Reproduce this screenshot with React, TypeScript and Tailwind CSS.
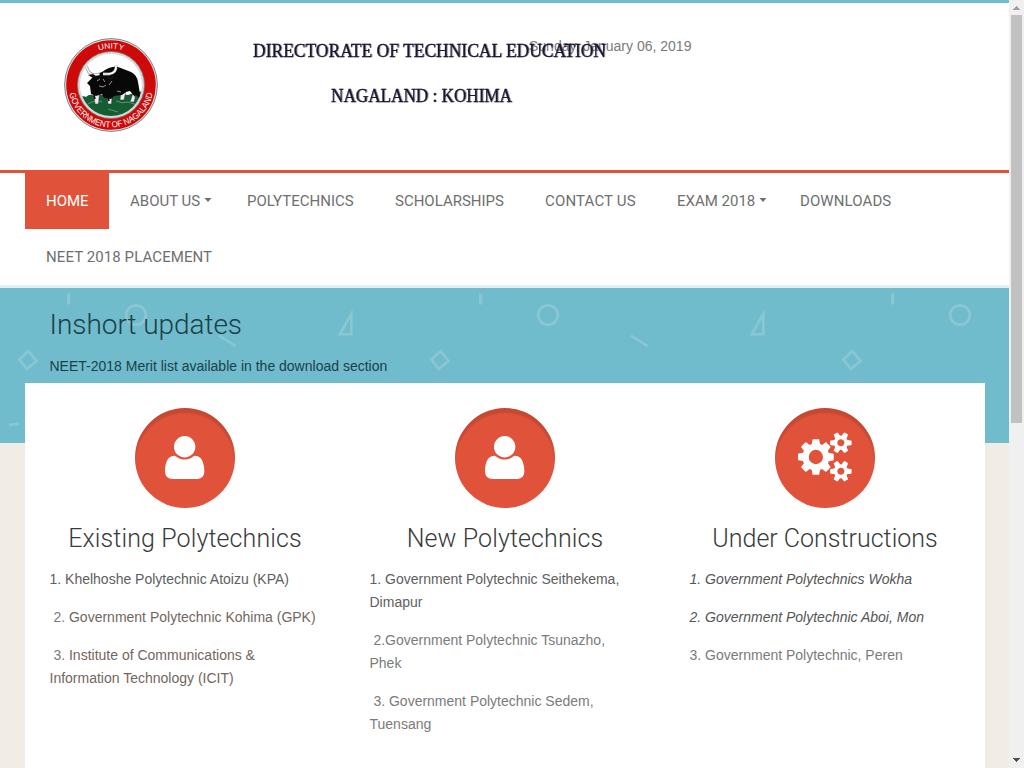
import React from "react";

const USER_PATH =
  "M1408 131q0-120-73-189.5t-194-69.5h-874q-121 0-194 69.5t-73 189.5q0 53 3.5 103.5t14 109t26.5 108.5t43 97.5t62 81t85.5 53.5t111.5 20q9 0 42-21.5t74.5-48t108-48t133.5-21.5t133.5 21.5t108 48t74.5 48t42 21.5q61 0 111.5-20t85.5-53.5t62-81t43-97.5t26.5-108.5t14-109t3.5-103.5zM1088 1024q0-159-112.5-271.5t-271.5-112.5t-271.5 112.5t-112.5 271.5t112.5 271.5t271.5 112.5t271.5-112.5t112.5-271.5z";

const COGS_PATH =
  "M896 896q0-106-75-181t-181-75-181 75-75 181 75 181 181 75 181-75 75-181zm768 512q0-52-38-90t-90-38-90 38-38 90q0 53 37.5 90.5t90.5 37.5 90.5-37.5 37.5-90.5zm0-1024q0-52-38-90t-90-38-90 38-38 90q0 53 37.5 90.5t90.5 37.5 90.5-37.5 37.5-90.5zm-384 421v185q0 10-7 19.5t-16 10.5l-155 24q-11 35-32 76 34 48 90 115 7 11 7 20 0 12-7 19-23 30-82.5 89.5t-78.5 59.5q-11 0-21-7l-115-90q-37 19-77 31-11 108-23 155-7 24-30 24h-186q-11 0-20-7.5t-10-17.5l-23-153q-34-10-75-31l-118 89q-7 7-20 7-11 0-21-8-144-133-144-160 0-9 7-19 10-14 41-53t47-61q-23-44-35-82l-152-24q-10-1-17-9.5t-7-19.5v-185q0-10 7-19.5t16-10.5l155-24q11-35 32-76-34-48-90-115-7-11-7-20 0-12 7-20 22-30 82-89t79-59q11 0 21 7l115 90q34-18 77-32 11-108 23-154 7-24 30-24h186q11 0 20 7.5t10 17.5l23 153q34 10 75 31l118-89q8-7 20-7 11 0 21 8 144 133 144 160 0 8-7 19-12 16-42 54t-45 60q23 48 34 82l152 23q10 2 17 10.5t7 19.5zm640 533v140q0 16-149 31-12 27-30 52 51 113 51 138 0 4-4 7-122 71-124 71-8 0-46-47t-52-68q-20 2-30 2t-30-2q-14 21-52 68t-46 47q-2 0-124-71-4-3-4-7 0-25 51-138-18-25-30-52-149-15-149-31v-140q0-16 149-31 13-29 30-52-51-113-51-138 0-4 4-7 4-2 35-20t59-34 30-16q8 0 46 46.5t52 67.5q20-2 30-2t30 2q51-71 92-112l6-2q4 0 124 70 4 3 4 7 0 25-51 138 17 23 30 52 149 15 149 31zm0-1024v140q0 16-149 31-12 27-30 52 51 113 51 138 0 4-4 7-122 71-124 71-8 0-46-47t-52-68q-20 2-30 2t-30-2q-14 21-52 68t-46 47q-2 0-124-71-4-3-4-7 0-25 51-138-18-25-30-52-149-15-149-31v-140q0-16 149-31 13-29 30-52-51-113-51-138 0-4 4-7 4-2 35-20t59-34 30-16q8 0 46 46.5t52 67.5q20-2 30-2t30 2q51-71 92-112l6-2q4 0 124 70 4 3 4 7 0 25-51 138 17 23 30 52 149 15 149 31z";

function UserIcon() {
  return (
    <svg className="mb-[2px] h-[43px] w-[39.3px]" viewBox="0 0 1408 1536" fill="#fff">
      <g transform="translate(0 1408) scale(1 -1)">
        <path d={USER_PATH} />
      </g>
    </svg>
  );
}

function CogsIcon() {
  return (
    <svg className="mb-[2px] h-[50px] w-[53.6px]" viewBox="0 0 1920 1792" fill="#fff">
      <path d={COGS_PATH} />
    </svg>
  );
}

function Seal() {
  return (
    <svg className="h-[94px] w-[94px]" viewBox="0 0 94 94" fontFamily="'Liberation Sans', Arial, sans-serif">
      <defs>
        <path id="seal-top" d="M10.500 47a36.500 36.500 0 0 1 73 0" />
        <path id="seal-bottom" d="M4.500 47a42.500 42.500 0 0 0 85 0" />
        <clipPath id="seal-inner">
          <circle cx="47" cy="47" r="31" />
        </clipPath>
      </defs>
      <circle cx="47" cy="47" r="46.4" fill="#ddd" stroke="#777" strokeWidth="0.9" />
      <circle cx="47" cy="47" r="44.8" fill="#cf0808" />
      <circle cx="47" cy="47" r="33.500" fill="#d8d8d8" stroke="#777" strokeWidth="0.8" />
      <circle cx="47" cy="47" r="31" fill="#fff" />
      <g clipPath="url(#seal-inner)">
        <path d="M14 61q5-4 8-2 4-4 8-1 4-3 8-1 8-1 12-1 8 0 14 1 5-2 10-3 6-2 10 4v24H14z" fill="#155d33" />
        <path d="M24 66q8-5 14-2M52 63q6 3 12 1l9 3M44 71l10 3" stroke="#7cab8c" strokeWidth="0.7" fill="none" />
        <path d="M29 53l2 13h3.500l1-11zM43 54l1 12h3.500l1-12zM57 52l-1 10h4l2-9zM67 48l2 7-3 9h4l3-11z" fill="#ececec" stroke="#333" strokeWidth="0.5" />
        <path d="M28 40q2-4 10-6 8-6 16-5 8 3 13 5 6 3 7 10l2 12-1 4-3-3-1 2-5-6-4 1-4 3-8 1-3 3-7-1-2-4-6 2-5-2-1-8-3-3z" fill="#080808" />
        <path d="M30 57l1 4M44 58l1 5" stroke="#080808" strokeWidth="1.500" />
        <path d="M22.500 28q1 8 8 9l5-1M52 27q1 8-7 9l-6 0" fill="none" stroke="#888" strokeWidth="2.800" />
        <path d="M22.500 28q1 8 8 9l5-1M52 27q1 8-7 9l-6 0" fill="none" stroke="#fff" strokeWidth="1.600" />
        <path d="M24 37l5 3 3-2-3-2zM44 39l6-1-1 3-4 1z" fill="#111" />
        <path d="M33 43l3-2M39 41l2 3M35 48l4 1 3-2M45 47l3-4M53 53l4 1" stroke="#bbb" strokeWidth="0.800" fill="none" />
      </g>
      <text fill="#fff" fontSize="8" textAnchor="middle">
        <textPath href="#seal-top" startOffset="50%" textLength="25" lengthAdjust="spacingAndGlyphs">UNITY</textPath>
      </text>
      <text fill="#fff" fontSize="8.7" textAnchor="middle">
        <textPath href="#seal-bottom" startOffset="50%" textLength="116" lengthAdjust="spacingAndGlyphs">GOVERNMENT OF NAGALAND</textPath>
      </text>
    </svg>
  );
}

function Wordmark() {
  return (
    <svg
      className="h-[90px] w-[370px] overflow-visible [filter:drop-shadow(1px_0_0_rgba(28,22,48,0.38))]"
      viewBox="0 0 370 90"
      fontFamily="'Liberation Serif', serif"
      fontSize="19.500"
      fill="#1c1630"
      stroke="#1c1630"
      strokeWidth="0.35"
    >
      <text x="8" y="27" textLength="353" lengthAdjust="spacingAndGlyphs">DIRECTORATE OF TECHNICAL EDUCATION</text>
      <text x="86" y="72" textLength="181" lengthAdjust="spacingAndGlyphs">NAGALAND : KOHIMA</text>
    </svg>
  );
}

function BannerPattern() {
  return (
    <svg className="absolute inset-0 h-full w-full">
      <defs>
        <pattern id="confetti" width="412" height="412" patternUnits="userSpaceOnUse">
          <g fill="none" stroke="#8bc7d3" strokeWidth="2.5">
            <path d="M68.6 5.5v11" strokeWidth="3" />
            <circle cx="136" cy="27" r="9.8" />
            <path d="M219 47.500l16.500 10.500" />
            <path d="M351.300 26v20.300h-11.500z" />
            <path d="M28.500 63l8 10-9.700 8-7.500-9.500z" />
            <path d="M9 137l10-1.200" />
          </g>
        </pattern>
      </defs>
      <rect width="100%" height="100%" fill="url(#confetti)" />
    </svg>
  );
}

const menu = [
  { label: "HOME", size: "w-[84px] bg-[#e0533a] text-white" },
  { label: "ABOUT US", size: "w-[117px]", caret: true },
  { label: "POLYTECHNICS", size: "w-[148px]" },
  { label: "SCHOLARSHIPS", size: "w-[150px]" },
  { label: "CONTACT US", size: "w-[132px] tracking-[0.15px]" },
  { label: "EXAM 2018", size: "w-[123px]", caret: true },
  { label: "DOWNLOADS", size: "w-[132px] tracking-[0.1px]" },
  { label: "NEET 2018 PLACEMENT", size: "w-[207px] tracking-[0.09px]" },
];

function Column({ icon, title, children }: { icon: React.ReactNode; title: React.ReactNode; children: React.ReactNode }) {
  return (
    <section className="w-[320px] px-[25px]">
      <div className="mx-auto flex h-[100px] w-[100px] items-center justify-center rounded-full bg-[#e0533a] shadow-[inset_0_5px_2px_rgba(0,0,0,0.12)]">
        {icon}
      </div>
      <h2 className="mt-[14px] mb-[13px] text-center font-['Roboto'] text-[25px] leading-[33px] font-light whitespace-nowrap text-[#3a3a3a]">
        {title}
      </h2>
      <div className="-ml-[0.5px] flex flex-col gap-[15px]">{children}</div>
    </section>
  );
}

export default function App() {
  return (
    <div className="flex h-[768px] w-[1024px] overflow-hidden bg-[#f1ece5] font-['Liberation_Sans',Arial,sans-serif] text-[14px] leading-[23px] text-[#7b7b7b]">
      <div className="w-[1009px] shrink-0">
        <header className="flex h-[170px] border-t-[3px] border-[#70bccd] bg-white">
          <div className="mt-[35px] ml-[64px]">
            <Seal />
          </div>
          <div className="mt-[27px] ml-[87px]">
            <Wordmark />
          </div>
          <p className="mt-[32px] ml-[-86px] whitespace-nowrap">Sunday, January 06, 2019</p>
        </header>
        <nav className="flex h-[118px] flex-wrap content-start border-t-[3px] border-b-[3px] border-t-[#e0533a] border-b-[#e2eff4] bg-white px-[25px] font-['Roboto'] text-[15px] text-[#6f6f6f]">
          {menu.map((m) => (
            <a key={m.label} className={"flex h-[56px] items-center pl-[21px] whitespace-nowrap " + m.size}>
              {m.label}
              {m.caret && (
                <svg className="mb-[3px] ml-[4px] h-[4px] w-[8px]" viewBox="0 0 8 4" fill="#6f6f6f">
                  <path d="M0.500 0h7l-3.500 4z" />
                </svg>
              )}
            </a>
          ))}
        </nav>
        <div className="relative h-[155px] bg-[#70bccd] px-[49.5px] pt-[19px]">
          <BannerPattern />
          <h1 className="relative font-['Roboto'] text-[28px] leading-[36px] font-light tracking-[-0.05px] text-[#1b4048]">Inshort updates</h1>
          <p className="relative mt-[12px] text-[#1b4048]">NEET-2018 Merit list available in the download section</p>
        </div>
        <main className="relative mt-[-60px] ml-[25px] flex h-[400px] w-[960px] bg-white pt-[25px]">
          <Column icon={<UserIcon />} title={<span className="tracking-[0.1px]">Existing Polytechnics</span>}>
            <p className="text-[#606060]">1. Khelhoshe Polytechnic Atoizu (KPA)</p>
            <p>
              &nbsp;2. <span className="text-[#73665e]">Government Polytechnic Kohima (GPK)</span>
            </p>
            <p>
              &nbsp;3. <span className="text-[#73665e]">Institute of Communications &amp; Information Technology (ICIT)</span>
            </p>
          </Column>
          <Column icon={<UserIcon />} title={<span className="tracking-[0.1px]">New Polytechnics</span>}>
            <p className="text-[#606060]">1. Government Polytechnic Seithekema, Dimapur</p>
            <p>&nbsp;2.Government Polytechnic Tsunazho, Phek</p>
            <p>&nbsp;3. Government Polytechnic Sedem, Tuensang</p>
          </Column>
          <Column icon={<CogsIcon />} title="Under Constructions">
            <p className="text-[#555] italic">1. Government Polytechnics Wokha</p>
            <p className="text-[#555] italic">2. Government Polytechnic Aboi, Mon</p>
            <p>3. Government Polytechnic, Peren</p>
          </Column>
        </main>
      </div>
      <div className="flex w-[15px] flex-col items-center bg-[#f0f0f0]">
        <svg className="h-[15px] w-[15px] shrink-0" viewBox="0 0 15 15" fill="#a0a0a0">
          <path d="M7 6h1v1h1v1h1v1h1v1h-7v-1h1v-1h1v-1h1z" />
        </svg>
        <div className="h-[408px] w-[11px] bg-[#c1c1c1]" />
        <svg className="mt-auto h-[15px] w-[15px] shrink-0" viewBox="0 0 15 15" fill="#505050">
          <path d="M4 5h7v1h-1v1h-1v1h-1v1h-1v-1h-1v-1h-1v-1h-1z" />
        </svg>
      </div>
    </div>
  );
}
